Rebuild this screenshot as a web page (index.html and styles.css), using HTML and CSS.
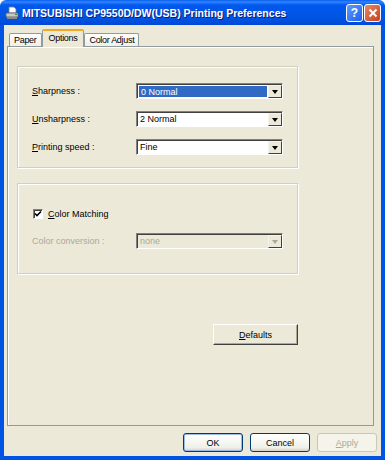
FILE: index.html
```html
<!DOCTYPE html>
<html lang="en">
<head>
    <meta charset="UTF-8">
    <title>Printing Preferences</title>
    <link rel="stylesheet" href="styles.css">
</head>
<body>

    <div class="window">
        <div class="titlebar">
            <svg class="app-icon" width="14" height="14" viewBox="0 0 14 14">
                <path d="M4 1h5l2 2v4H4z" fill="#fff" stroke="#7b7b7b" stroke-width="0.8"/>
                <path d="M1 7h12v4H1z" fill="#c8c8c8" stroke="#5a5a5a" stroke-width="0.8"/>
                <path d="M2 11h10v2H2z" fill="#8a8a8a"/>
                <rect x="10" y="8" width="2" height="1" fill="#3c8c3c"/>
            </svg>
            <span class="title">MITSUBISHI CP9550D/DW(USB) Printing Preferences</span>
            <div class="caption-buttons">
                <span class="cap-btn help">?</span>
                <span class="cap-btn close">
                    <svg width="10" height="10" viewBox="0 0 10 10">
                        <path d="M1.5 1.5l7 7M8.5 1.5l-7 7" stroke="#fff" stroke-width="2"/>
                    </svg>
                </span>
            </div>
        </div>

        <div class="frame">
            <div class="tabs">
                <div class="tab">Paper</div>
                <div class="tab active">Options</div>
                <div class="tab">Color Adjust</div>
            </div>

            <div class="panel">
                <div class="group group-options">
                    <div class="row">
                        <span class="label"><u>S</u>harpness :</span>
                        <div class="combo focused">
                            <span class="combo-value">0 Normal</span>
                            <span class="combo-arrow"></span>
                        </div>
                    </div>
                    <div class="row">
                        <span class="label"><u>U</u>nsharpness :</span>
                        <div class="combo">
                            <span class="combo-value">2 Normal</span>
                            <span class="combo-arrow"></span>
                        </div>
                    </div>
                    <div class="row">
                        <span class="label"><u>P</u>rinting speed :</span>
                        <div class="combo">
                            <span class="combo-value">Fine</span>
                            <span class="combo-arrow"></span>
                        </div>
                    </div>
                </div>

                <div class="group group-color">
                    <div class="check-row">
                        <span class="checkbox">
                            <svg width="8" height="8" viewBox="0 0 8 8">
                                <path d="M1 3.5l2 2 4-4" fill="none" stroke="#000" stroke-width="1.6"/>
                            </svg>
                        </span>
                        <span><u>C</u>olor Matching</span>
                    </div>
                    <div class="row disabled">
                        <span class="label">Color conversion :</span>
                        <div class="combo">
                            <span class="combo-value">none</span>
                            <span class="combo-arrow"></span>
                        </div>
                    </div>
                </div>

                <div class="panel-actions">
                    <button class="btn classic"><u>D</u>efaults</button>
                </div>
            </div>

            <div class="dialog-buttons">
                <button class="btn default">OK</button>
                <button class="btn">Cancel</button>
                <button class="btn" disabled><u>A</u>pply</button>
            </div>
        </div>
    </div>

</body>
</html>
```

FILE: styles.css
```css
body {
    margin: 0;
    background: #fff;
    font-family: "Liberation Sans", Arial, sans-serif;
    font-size: 9px;
    color: #000;
}
u {
    text-decoration: underline;
}
.window {
    width: 385px;
    height: 460px;
}

/* title bar */
.titlebar {
    height: 25px;
    box-sizing: border-box;
    display: flex;
    align-items: center;
    padding: 0 4px 0 5px;
    border-radius: 6px 6px 0 0;
    background: linear-gradient(#0a5ff0 0%, #2f83ff 8%, #0058ee 20%, #0054e3 70%, #0048d8 100%);
}
.app-icon {
    flex: none;
    margin-right: 3px;
}
.title {
    color: #fff;
    font-weight: bold;
    font-size: 10.5px;
    text-shadow: 1px 1px #0a1e7a;
    white-space: nowrap;
}
.caption-buttons {
    margin-left: auto;
    display: flex;
    gap: 1px;
}
.cap-btn {
    width: 15px;
    height: 16px;
    border: 1px solid #fff;
    border-radius: 3px;
    display: flex;
    align-items: center;
    justify-content: center;
    color: #fff;
    font-weight: bold;
    font-size: 12px;
}
.help {
    background: linear-gradient(135deg, #5f9bff, #2060e8);
}
.close {
    background: linear-gradient(135deg, #e8876a, #c9401a);
}

/* client area */
.frame {
    height: 435px;
    box-sizing: border-box;
    border: 4px solid #0054e3;
    border-top: 0;
    background: #ece9d8;
    padding: 4px 0 0 3px;
}
.tabs {
    display: flex;
    align-items: flex-end;
    height: 18px;
    margin: 0 0 -1px 2px;
    position: relative;
}
.tab {
    height: 13px;
    margin-bottom: 1px;
    box-sizing: border-box;
    padding: 0 4px;
    line-height: 12px;
    letter-spacing: -0.3px;
    border: 1px solid #919b9c;
    border-bottom: 0;
    border-radius: 2px 2px 0 0;
    background: linear-gradient(#fff, #f0efe8);
}
.tab.active {
    height: 18px;
    margin-bottom: 0;
    padding: 0 6px;
    line-height: 15px;
    background: #ece9d8;
    border-top: 2px solid #f0a82a;
}
.panel {
    width: 367px;
    height: 380px;
    box-sizing: border-box;
    border: 1px solid #919b9c;
    box-shadow: inset 1px 1px #fff;
    padding: 19px 0 0 9px;
}

/* group boxes */
.group {
    width: 281px;
    box-sizing: border-box;
    border: 1px solid #d0d0bf;
    box-shadow: inset 1px 1px #fff, 1px 1px #fff;
    padding-left: 14px;
}
.group-options {
    height: 102px;
    padding-top: 16px;
}
.group-color {
    height: 91px;
    margin-top: 15px;
    padding-top: 24px;
}
.row {
    display: flex;
    align-items: center;
    height: 16px;
    margin-bottom: 12px;
}
.label {
    width: 104px;
}
.combo {
    width: 147px;
    height: 16px;
    box-sizing: border-box;
    display: flex;
    border: 1px solid;
    border-color: #808080 #fff #fff #808080;
    box-shadow: inset 1px 1px #404040;
    background: #fff;
    padding: 1px 0 0 1px;
}
.combo-value {
    flex: 1;
    padding-left: 2px;
    line-height: 13px;
}
.combo.focused .combo-value {
    background: #316ac5;
    color: #fff;
    margin: 1px;
}
.combo-arrow {
    width: 14px;
    box-sizing: border-box;
    border: 1px solid;
    border-color: #f4f3ee #404040 #404040 #f4f3ee;
    background: #ece9d8;
    position: relative;
}
.combo-arrow::after {
    content: "";
    position: absolute;
    left: 3px;
    top: 4px;
    border: 3.5px solid transparent;
    border-top: 4px solid #000;
    border-bottom: 0;
}
.disabled {
    color: #aca899;
}
.disabled .combo {
    background: #ece9d8;
}
.disabled .combo-arrow::after {
    border-top-color: #aca899;
}
.check-row {
    display: flex;
    align-items: center;
    gap: 5px;
    height: 11px;
    margin: 0 0 14px 1px;
}
.checkbox {
    width: 10px;
    height: 10px;
    box-sizing: border-box;
    border: 1px solid;
    border-color: #808080 #fff #fff #808080;
    box-shadow: inset 1px 1px #404040;
    background: #fff;
    display: flex;
    align-items: center;
    justify-content: center;
}

/* buttons */
.panel-actions {
    width: 281px;
    display: flex;
    justify-content: flex-end;
    margin-top: 50px;
}
.btn {
    width: 60px;
    height: 19px;
    padding: 0;
    font-family: inherit;
    font-size: 9px;
    color: #000;
    border: 1px solid #003c74;
    border-radius: 3px;
    background: linear-gradient(#fff, #f0f0ea 80%, #d6d0c5);
}
.btn.default {
    box-shadow: inset 0 0 0 1px #9cb9e8;
}
.btn:disabled {
    color: #aca899;
    border-color: #c9c7ba;
    background: #f5f4ea;
}
.btn.classic {
    width: 85px;
    height: 21px;
    border-radius: 0;
    border-color: #fff #404040 #404040 #fff;
    box-shadow: inset -1px -1px #aca899;
    background: #ece9d8;
}
.dialog-buttons {
    display: flex;
    justify-content: flex-end;
    gap: 7px;
    margin-top: 7px;
    padding-right: 4px;
}
```
